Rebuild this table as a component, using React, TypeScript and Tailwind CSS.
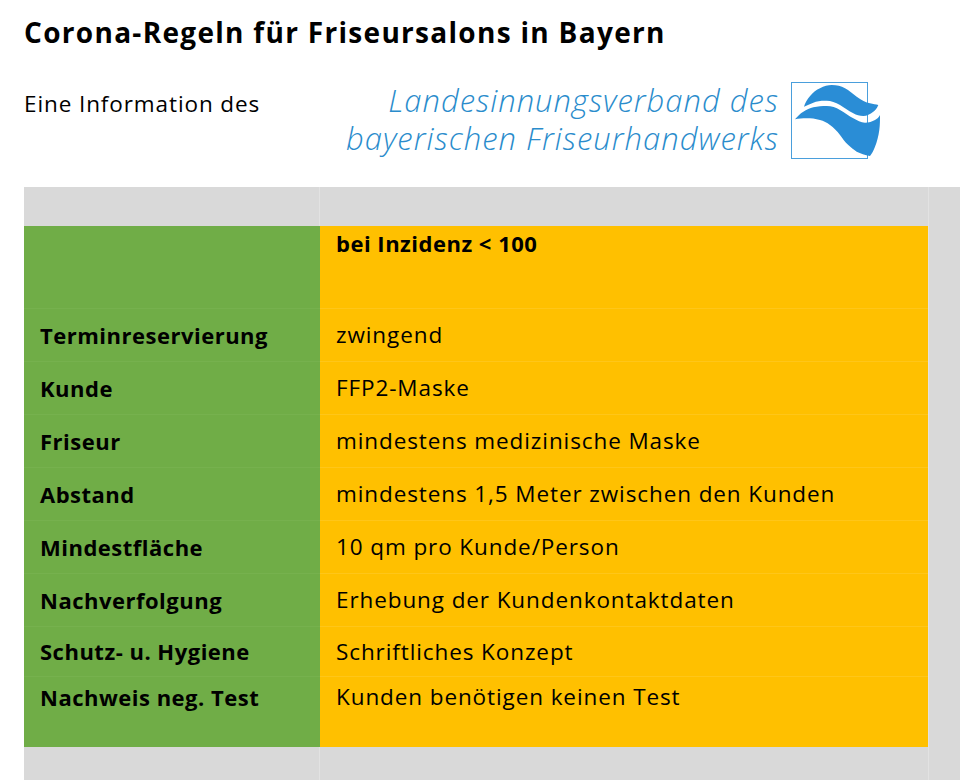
const rows: { label: string; value: string; h: string }[] = [
  { label: "Terminreservierung", value: "zwingend", h: "h-[53px]" },
  { label: "Kunde", value: "FFP2-Maske", h: "h-[53px]" },
  { label: "Friseur", value: "mindestens medizinische Maske", h: "h-[53px]" },
  { label: "Abstand", value: "mindestens 1,5 Meter zwischen den Kunden", h: "h-[53px]" },
  { label: "Mindestfläche", value: "10 qm pro Kunde/Person", h: "h-[53px]" },
  { label: "Nachverfolgung", value: "Erhebung der Kundenkontaktdaten", h: "h-[53px]" },
  { label: "Schutz- u. Hygiene", value: "Schriftliches Konzept", h: "h-[50px]" },
];

function Logo() {
  return (
    <svg width="100" height="78" viewBox="0 0 100 78" className="shrink-0">
      <rect x="0.5" y="0.5" width="76" height="76" fill="none" stroke="#4a9fdc" strokeWidth="1" />
      {/* upper wave */}
      <path
        d="M13 24.7 C15 18 22 9 29 6.3 C33 4 37 3 40.7 3 C46 3 50 4 54 6.3 C58 8.5 62 12 65.7 14.7 C70 18 75 20.5 79 21.3 C82 22 85 22.5 87.3 23 C86 26 84.5 28.5 82.3 29.7 C79 32 76 34 72.3 34 C68.5 34 65.5 33 62.3 31.3 C57 28.5 53 25.5 49 23 C44.5 20.5 40 18.7 35.7 18.7 C31 18.5 26 19 22.3 20.7 C19 22 16 23.5 13 24.7 Z"
        fill="#2a8dd6"
      />
      {/* lower wave */}
      <path
        d="M4 37.3 C6.5 34.5 9 31.5 12.3 29.7 C15.5 27.5 19 26 22.3 25.3 C27 24.3 31 24 35.7 24 C40.5 24 45 25.5 49 28 C53.5 30.5 58 34 62.3 36.3 C66 38.5 70 40.7 74 40.7 C78 40.7 81 39.5 84 38 C86 37 88 35 89 33 C89 38 89 43 88.3 48 C87.5 54 86 60 84 64.7 C82.5 68.5 81 71.5 79 74 C74 73 69.5 71.5 65.7 69.7 C62.5 67.5 60 65.5 57.3 63 C54 60 51.5 56.5 49 53 C46 49 42.5 45.5 39 43 C36 40.5 32.5 39 29 38 C24.5 36.7 20 36.3 15.7 36.3 C11.5 36.3 7.5 36.7 4 37.3 Z"
        fill="#2a8dd6"
      />
    </svg>
  );
}

export default function App() {
  return (
    <div className="w-[960px] h-[780px] overflow-hidden bg-white font-['Open_Sans','Liberation_Sans',sans-serif] text-black">
      <h1 className="pl-6 pt-[13px] h-[60px] text-[28px] font-bold leading-[38px] tracking-[1.3px]">
        Corona-Regeln für Friseursalons in Bayern
      </h1>

      <div className="flex h-[127px]">
        <div className="pl-6 pt-[29px] w-[320px] text-[22.5px] leading-[30px] tracking-[0.9px]">
          Eine Information des
        </div>
        <div className="flex flex-1 pt-[21px]">
          <div className="flex-1 pr-[12px] text-right italic font-light text-[31px] leading-[38px] tracking-[1px] text-[#2a8ccc]">
            <div>Landesinnungsverband des</div>
            <div>bayerischen Friseurhandwerks</div>
          </div>
          <div className="pr-[69px] pt-[1px]">
            <Logo />
          </div>
        </div>
      </div>

      <div className="flex">
        <div className="w-6 shrink-0" />
        <div className="flex-1">
          <div className="flex h-[39px] bg-[#d9d9d9]">
            <div className="w-[296px] border-r border-[#e2e2e2]" />
            <div className="flex-1" />
          </div>
          <div className="flex h-[83px]">
            <div className="w-[296px] bg-[#70ad47] border-b border-[#76b14e]" />
            <div className="flex-1 bg-[#ffc000] border-b border-[#ffc619] pl-4 pt-[2px] text-[22px] font-bold leading-[30px] tracking-[0.5px]">
              bei Inzidenz &lt; 100
            </div>
          </div>
          {rows.map((row) => (
            <div key={row.label} className={`flex ${row.h}`}>
              <div className="w-[296px] bg-[#70ad47] border-b border-[#76b14e] pl-4 flex items-center text-[22px] font-bold tracking-[0.5px]">
                {row.label}
              </div>
              <div className="flex-1 bg-[#ffc000] border-b border-[#ffc619] pl-4 flex items-center text-[22.5px] tracking-[0.9px]">
                {row.value}
              </div>
            </div>
          ))}
          <div className="flex h-[70px]">
            <div className="w-[296px] bg-[#70ad47] pl-4 pt-[5px] text-[22px] font-bold leading-[30px] tracking-[0.5px]">
              Nachweis neg. Test
            </div>
            <div className="flex-1 bg-[#ffc000] pl-4 pt-[5px] text-[22.5px] leading-[30px] tracking-[0.9px]">
              Kunden benötigen keinen Test
            </div>
          </div>
          <div className="flex h-[40px] bg-[#d9d9d9]">
            <div className="w-[296px] border-r border-[#e2e2e2]" />
            <div className="flex-1" />
          </div>
        </div>
        <div className="w-[32px] shrink-0 bg-[#d9d9d9] border-l border-[#e2e2e2]" />
      </div>
    </div>
  );
}
